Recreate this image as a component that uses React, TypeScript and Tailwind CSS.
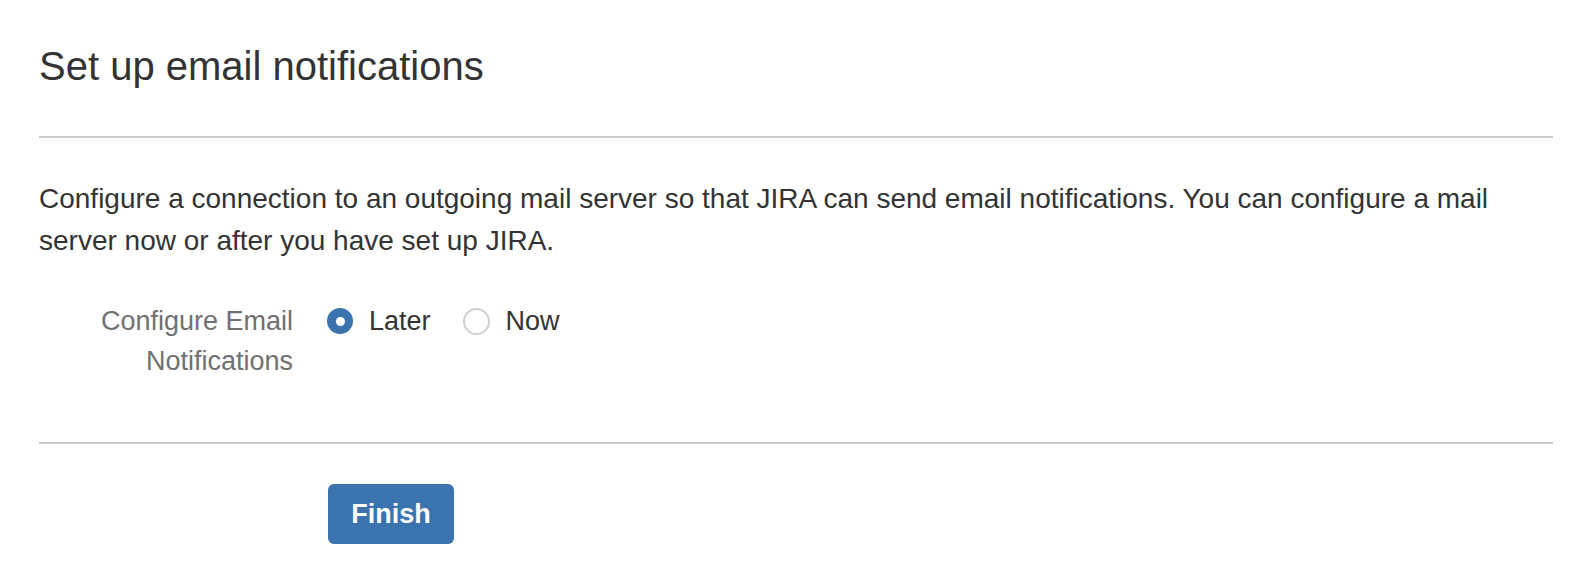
import { useState } from "react";

const font = { fontFamily: '"Liberation Sans", Arial, Helvetica, sans-serif' };

type Choice = "later" | "now";

const Radio = ({ checked }: { checked: boolean }) =>
  checked ? (
    <span className="flex h-[26px] w-[26px] items-center justify-center rounded-full bg-[#3b73af]">
      <span className="h-[9px] w-[9px] rounded-full bg-white" />
    </span>
  ) : (
    <span className="h-[27px] w-[27px] rounded-full border-2 border-[#cfcfcf] bg-white" />
  );

export default function App() {
  const [choice, setChoice] = useState<Choice>("later");

  const options: { value: Choice; label: string }[] = [
    { value: "later", label: "Later" },
    { value: "now", label: "Now" },
  ];

  return (
    <div className="min-h-[582px] w-full bg-white pl-[39px] pr-[33px] text-[#333333]" style={font}>
      <h1 className="pt-[42px] text-[40px] font-normal leading-[48px]">Set up email notifications</h1>

      <div className="mt-[46px] border-t-2 border-[#cccccc]" />

      <p className="mt-[40px] text-[28px] leading-[42px]">
        Configure a connection to an outgoing mail server so that JIRA can send email notifications. You can
        configure a mail server now or after you have set up JIRA.
      </p>

      <div className="mt-[39px] flex items-start">
        <div className="w-[254px] text-right text-[27px] leading-[40px] text-[#707070]">
          Configure Email
          <br />
          Notifications
        </div>
        <div className="ml-[34px] flex items-center gap-[32px]">
          {options.map((opt) => (
            <label
              key={opt.value}
              className="flex cursor-pointer items-center gap-[16px]"
              onClick={() => setChoice(opt.value)}
            >
              <Radio checked={choice === opt.value} />
              <span className="text-[27px] leading-[40px] text-[#333333]">{opt.label}</span>
            </label>
          ))}
        </div>
      </div>

      <div className="mt-[61px] border-t-2 border-[#cccccc]" />

      <div className="mt-[40px] pl-[289px]">
        <button className="flex h-[60px] w-[126px] items-center justify-center rounded-[6px] bg-[#3b73af] text-[27px] font-bold text-white">
          Finish
        </button>
      </div>
    </div>
  );
}
